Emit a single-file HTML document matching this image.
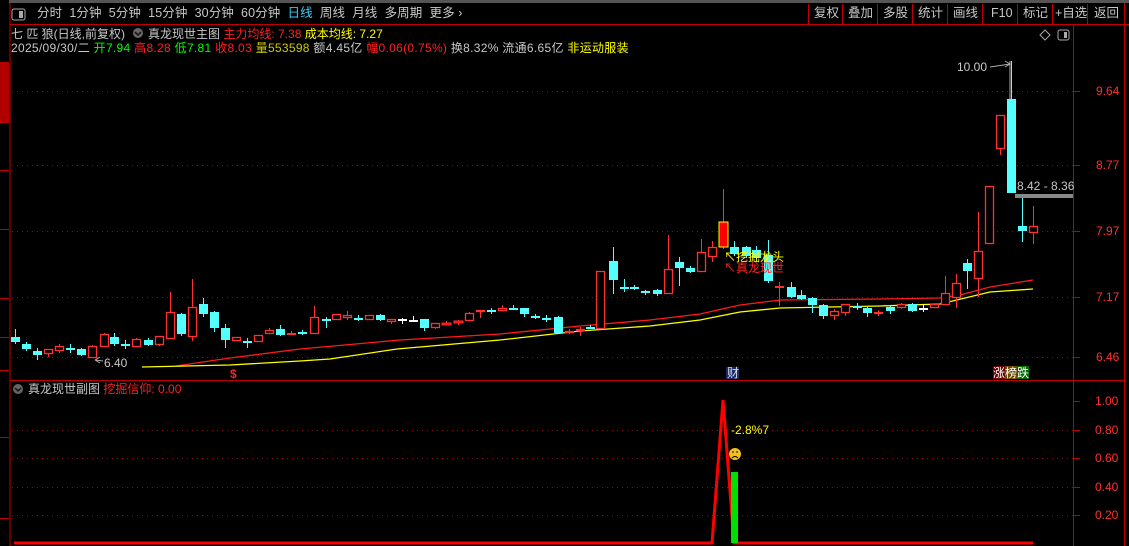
<!DOCTYPE html>
<html><head><meta charset="utf-8">
<style>
*{margin:0;padding:0;box-sizing:border-box}
body{width:1129px;height:546px;background:#000;overflow:hidden;position:relative;font-family:"Liberation Sans","Noto Sans CJK SC",sans-serif;font-size:12px;color:#c8c8c8}
.t{position:absolute;white-space:nowrap;line-height:14px}
svg{position:absolute;left:0;top:0}
</style></head><body>
<svg id="s" width="1129" height="546" xmlns="http://www.w3.org/2000/svg">
<rect x="0" y="0" width="1129" height="3" fill="#555"/>
<rect x="0" y="0" width="9" height="546" fill="#000"/>
<line x1="10" y1="3" x2="10" y2="546" stroke="#c00000"/>
<rect x="0" y="62" width="9" height="60" fill="#b00000"/>
<line x1="10" y1="24.5" x2="1129" y2="24.5" stroke="#c00000"/>
<line x1="10" y1="380.5" x2="1124" y2="380.5" stroke="#c00000"/>
<line x1="1073.5" y1="24" x2="1073.5" y2="546" stroke="#c00000"/>
<line x1="1124.5" y1="3" x2="1124.5" y2="546" stroke="#c00000"/>
<g stroke="#c00000">
<line x1="0" y1="122.5" x2="9" y2="122.5"/><line x1="0" y1="170.5" x2="9" y2="170.5"/><line x1="0" y1="229.5" x2="9" y2="229.5"/><line x1="0" y1="298.5" x2="9" y2="298.5"/><line x1="0" y1="337.5" x2="9" y2="337.5"/><line x1="0" y1="370.5" x2="9" y2="370.5"/><line x1="0" y1="437.5" x2="9" y2="437.5"/><line x1="0" y1="518.5" x2="9" y2="518.5"/>
<line x1="808.5" y1="4" x2="808.5" y2="24"/><line x1="842.5" y1="4" x2="842.5" y2="24"/><line x1="877.5" y1="4" x2="877.5" y2="24"/><line x1="912.5" y1="4" x2="912.5" y2="24"/><line x1="947.5" y1="4" x2="947.5" y2="24"/><line x1="982.5" y1="4" x2="982.5" y2="24"/><line x1="1017.5" y1="4" x2="1017.5" y2="24"/><line x1="1052.5" y1="4" x2="1052.5" y2="24"/><line x1="1087.5" y1="4" x2="1087.5" y2="24"/>
<line x1="1073" y1="91.5" x2="1080" y2="91.5"/><line x1="1073" y1="165.5" x2="1080" y2="165.5"/><line x1="1073" y1="231.5" x2="1080" y2="231.5"/><line x1="1073" y1="297.5" x2="1080" y2="297.5"/><line x1="1073" y1="357.5" x2="1080" y2="357.5"/>
<line x1="1073" y1="401.5" x2="1080" y2="401.5"/><line x1="1073" y1="430.5" x2="1080" y2="430.5"/><line x1="1073" y1="458.5" x2="1080" y2="458.5"/><line x1="1073" y1="487.5" x2="1080" y2="487.5"/><line x1="1073" y1="515.5" x2="1080" y2="515.5"/>
</g>
<g stroke="#8a1010" stroke-dasharray="1,4">
<line x1="12" y1="91.5" x2="1073" y2="91.5"/><line x1="12" y1="165.5" x2="1073" y2="165.5"/><line x1="12" y1="231.5" x2="1073" y2="231.5"/><line x1="12" y1="297.5" x2="1073" y2="297.5"/><line x1="12" y1="357.5" x2="1073" y2="357.5"/>
<line x1="12" y1="430.5" x2="1073" y2="430.5"/><line x1="12" y1="458.5" x2="1073" y2="458.5"/><line x1="12" y1="487.5" x2="1073" y2="487.5"/><line x1="12" y1="515.5" x2="1073" y2="515.5"/>
</g>
<rect x="12" y="9" width="13" height="11" rx="2" fill="none" stroke="#aaa"/><rect x="19" y="11" width="4" height="7" fill="#aaa"/>
<rect x="1058" y="30" width="11" height="10" rx="2" fill="none" stroke="#aaa"/><rect x="1064" y="32" width="3" height="6" fill="#aaa"/>
<path d="M1045 30 L1050 35 L1045 40 L1040 35 Z" fill="none" stroke="#aaa"/>
<circle cx="138" cy="33" r="5" fill="#666"/><path d="M135 32 L138 35 L141 32" stroke="#111" fill="none" stroke-width="1.5"/>
<circle cx="18" cy="389" r="5" fill="#666"/><path d="M15 388 L18 391 L21 388" stroke="#111" fill="none" stroke-width="1.5"/>
<polyline fill="none" stroke="#ff1a1a" stroke-width="1.3" points="176,366 230,358 300,349 400,340 500,334 580,326 650,320 700,314 740,305 780,300 880,299 940,298 960,295 990,287 1033,280"/>
<polyline fill="none" stroke="#ffff00" stroke-width="1.3" points="142,367 230,365 300,361 330,359 397,349 500,340 580,331 650,326 700,320 740,312 780,308 880,306 940,304 990,292 1033,289"/>
<g id="cd"></g>
<rect x="1015" y="194" width="58" height="4" fill="#888"/>
<line x1="1010" y1="61" x2="1010" y2="99" stroke="#aaa"/>
<path d="M990 67 L1010 64 M1005 61 L1010 64 L1005 67" stroke="#aaa" fill="none"/>
<path d="M95 360 L100 363 M95 360 L100 357 M95 360 L103 361" stroke="#aaa" fill="none"/>
<polyline fill="none" stroke="#ff0000" stroke-width="3" points="14,543 712,543 723,400 734,543 1033,543"/>
<rect x="731" y="472" width="7" height="71" fill="#00e000"/>
<circle cx="735" cy="454" r="6" fill="#f0c020"/><circle cx="733" cy="452" r="0.8" fill="#000"/><circle cx="737" cy="452" r="0.8" fill="#000"/><path d="M732 458 Q735 455 738 458" stroke="#000" fill="none"/>
<rect x="726" y="367" width="13" height="12" fill="#1a2a6a"/>
<rect x="993" y="366" width="12" height="13" fill="#6a0000"/><rect x="1005" y="366" width="12" height="13" fill="#6a4a00"/><rect x="1017" y="366" width="12" height="13" fill="#006a00"/>
</svg>
<div class="t" style="left:37px;top:6px;font-size:12.5px;letter-spacing:0.1px">分时&nbsp;&nbsp;1分钟&nbsp;&nbsp;5分钟&nbsp;&nbsp;15分钟&nbsp;&nbsp;30分钟&nbsp;&nbsp;60分钟&nbsp;&nbsp;<span style="color:#33ccff">日线</span>&nbsp;&nbsp;周线&nbsp;&nbsp;月线&nbsp;&nbsp;多周期&nbsp;&nbsp;更多 ›</div>
<div class="t" style="left:814px;top:6px;font-size:12.5px">复权</div>
<div class="t" style="left:848px;top:6px;font-size:12.5px">叠加</div>
<div class="t" style="left:883px;top:6px;font-size:12.5px">多股</div>
<div class="t" style="left:918px;top:6px;font-size:12.5px">统计</div>
<div class="t" style="left:953px;top:6px;font-size:12.5px">画线</div>
<div class="t" style="left:991px;top:6px;font-size:12.5px">F10</div>
<div class="t" style="left:1023px;top:6px;font-size:12.5px">标记</div>
<div class="t" style="left:1055px;top:6px;font-size:12.5px">+自选</div>
<div class="t" style="left:1094px;top:6px;font-size:12.5px">返回</div>
<div class="t" style="left:11px;top:27px">七 匹 狼(日线,前复权)</div>
<div class="t" style="left:148px;top:27px">真龙现世主图 <span style="color:#ff2020">主力均线: 7.38</span> <span style="color:#ffff00">成本均线: 7.27</span></div>
<div class="t" style="left:11px;top:41px;letter-spacing:0.3px">2025/09/30/二 <span style="color:#00ff00">开7.94</span> <span style="color:#ff2020">高8.28</span> <span style="color:#00ff00">低7.81</span> <span style="color:#ff2020">收8.03</span> <span style="color:#cccc00">量553598</span> 额4.45亿 <span style="color:#ff2020">幅0.06(0.75%)</span> 换8.32% 流通6.65亿 <span style="color:#ffff00">非运动服装</span></div>
<div class="t" style="left:28px;top:382px">真龙现世副图 <span style="color:#ff2020">挖掘信仰: 0.00</span></div>
<div class="t" style="left:1096px;top:84px;color:#ff3030">9.64</div>
<div class="t" style="left:1096px;top:158px;color:#ff3030">8.77</div>
<div class="t" style="left:1096px;top:224px;color:#ff3030">7.97</div>
<div class="t" style="left:1096px;top:290px;color:#ff3030">7.17</div>
<div class="t" style="left:1096px;top:350px;color:#ff3030">6.46</div>
<div class="t" style="left:1095px;top:394px;color:#ff3030">1.00</div>
<div class="t" style="left:1095px;top:423px;color:#ff3030">0.80</div>
<div class="t" style="left:1095px;top:451px;color:#ff3030">0.60</div>
<div class="t" style="left:1095px;top:480px;color:#ff3030">0.40</div>
<div class="t" style="left:1095px;top:508px;color:#ff3030">0.20</div>
<div class="t" style="left:957px;top:60px">10.00</div>
<div class="t" style="left:1017px;top:179px">8.42 - 8.36</div>
<div class="t" style="left:104px;top:356px">6.40</div>
<div class="t" style="left:724px;top:250px;color:#ffff00">↖挖掘龙头</div>
<div class="t" style="left:724px;top:261px;color:#ff2020">↖真龙现世</div>
<div class="t" style="left:230px;top:367px;color:#ff2020;font-weight:bold">$</div>
<div class="t" style="left:727px;top:366px;color:#ddd">财</div>
<div class="t" style="left:993px;top:366px;color:#fff">涨榜跌</div>
<div class="t" style="left:731px;top:423px;color:#ffff00">-2.8%7</div>
<script>
var d=[[15,337,342,329,344,'c'],[26,344,349,342,351,'c'],[37,351,355,348,360,'c'],[48,349,354,349,357,'r'],[59,346,351,344,353,'r'],[70,348,348,344,353,'c'],[81,349,355,348,356,'c'],[92,346,358,345,358,'r'],[104,334,347,333,347,'r'],[114,337,344,333,346,'c'],[125,344,344,340,349,'c'],[136,339,347,338,347,'r'],[148,340,345,338,346,'c'],[159,336,345,336,346,'r'],[170,312,339,292,339,'r'],[181,314,334,313,336,'c'],[192,307,337,279,341,'r'],[203,304,314,298,317,'c'],[214,312,328,311,332,'c'],[225,328,340,324,348,'c'],[236,337,341,337,341,'r'],[247,341,341,338,348,'c'],[258,335,342,335,342,'r'],[269,330,334,328,334,'r'],[280,329,335,325,336,'c'],[291,333,334,331,334,'r'],[302,332,334,330,335,'c'],[314,317,334,306,334,'r'],[326,319,319,317,328,'c'],[336,314,320,314,320,'r'],[347,315,318,311,320,'r'],[358,318,318,315,321,'c'],[369,315,320,315,320,'r'],[380,315,320,314,321,'c'],[391,319,322,319,324,'r'],[402,319,319,318,324,'w'],[413,320,320,316,321,'w'],[424,319,328,319,331,'c'],[435,323,328,323,329,'r'],[446,323,325,321,325,'R'],[458,321,323,320,325,'R'],[469,313,321,312,321,'r'],[480,310,312,310,318,'r'],[491,310,312,308,314,'c'],[502,308,311,305,311,'r'],[513,308,308,305,310,'c'],[524,308,314,308,317,'c'],[535,316,317,314,319,'c'],[546,318,318,315,322,'c'],[558,317,333,316,333,'c'],[569,331,333,329,334,'r'],[580,329,331,327,336,'r'],[590,327,327,325,329,'c'],[600,271,329,271,329,'r'],[613,261,280,247,294,'c'],[624,287,287,279,292,'c'],[634,287,288,285,290,'c'],[645,291,293,290,295,'c'],[657,290,294,289,296,'c'],[668,269,294,235,294,'r'],[679,262,268,257,286,'c'],[690,268,272,266,273,'c'],[701,252,272,239,272,'r'],[712,247,257,241,262,'r'],[723,222,247,189,249,'R'],[734,247,254,241,256,'c'],[746,247,256,246,258,'c'],[756,250,258,246,262,'c'],[768,255,281,240,283,'c'],[779,286,286,282,306,'R'],[791,287,297,282,298,'c'],[801,295,299,290,300,'c'],[812,298,305,297,313,'c'],[823,305,316,304,319,'c'],[834,311,316,309,320,'r'],[845,304,313,304,316,'r'],[857,306,306,303,310,'c'],[867,308,313,306,317,'c'],[878,312,313,310,316,'R'],[890,307,311,305,314,'c'],[901,304,308,303,309,'r'],[912,304,311,303,312,'c'],[923,308,308,305,312,'w'],[934,304,308,304,308,'r'],[945,293,305,276,305,'r'],[956,283,298,274,308,'r'],[967,263,271,259,289,'c'],[978,251,279,212,297,'r'],[989,186,244,186,244,'r'],[1000,115,149,115,155,'r'],[1011,99,193,61,193,'c'],[1022,226,231,198,242,'c'],[1033,226,233,206,244,'r']];
var g=document.getElementById('cd'),h='';
d.forEach(function(c){var x=c[0],t=c[5],col=t=='c'?'#54ffff':t=='w'?'#ffffff':'#ff3030';
h+='<line x1="'+(x+.5)+'" y1="'+c[3]+'" x2="'+(x+.5)+'" y2="'+c[4]+'" stroke="'+col+'"/>';
var hgt=c[2]-c[1];
if(hgt<2){h+='<rect x="'+(x-4)+'" y="'+c[1]+'" width="9" height="2" fill="'+col+'"/>';}
else if(t=='r'){h+='<rect x="'+(x-3.5)+'" y="'+(c[1]+.5)+'" width="8" height="'+(hgt-1)+'" fill="#000" stroke="'+col+'" stroke-width="1.3"/>';}
else if(t=='R'){h+='<rect x="'+(x-4)+'" y="'+c[1]+'" width="9" height="'+hgt+'" fill="#ff0000" stroke="'+(x==723?'#ffff00':col)+'"/>';}
else{h+='<rect x="'+(x-4)+'" y="'+c[1]+'" width="9" height="'+hgt+'" fill="'+col+'"/>';}
});
g.innerHTML=h;
</script>
</body></html>
